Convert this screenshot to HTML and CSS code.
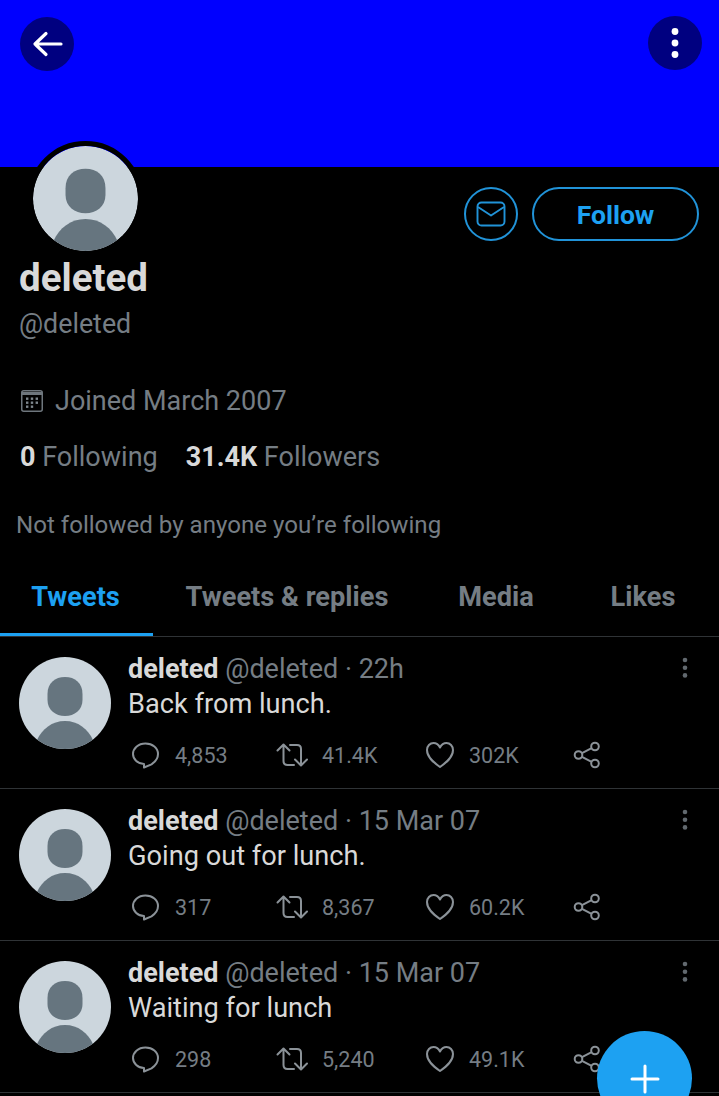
FILE: index.html
```html
<!DOCTYPE html>
<html lang="en">
  <head>
    <meta charset="UTF-8" />
    <meta name="viewport" content="width=device-width, initial-scale=1.0" />
    <title>deleted</title>
    <link rel="stylesheet" href="styles.css">
  </head>
  <body>
    <div class="page">
      <div class="banner">
        <button class="round-btn">
          <svg width="34" height="34" viewBox="0 0 34 34" fill="none" stroke="#fff" stroke-width="3.200" stroke-linecap="round" stroke-linejoin="round"><path d="M5 17h26M16 6.500L5 17l11 10.500"/></svg>
        </button>
        <button class="round-btn round-btn-more">
          <svg width="10" height="32" viewBox="0 0 10 32"><circle cx="5" cy="4.500" r="3.400" fill="#fff"/><circle cx="5" cy="16" r="3.400" fill="#fff"/><circle cx="5" cy="27.500" r="3.400" fill="#fff"/></svg>
        </button>
      </div>

      <div class="profile">
        <div class="actions">
          <button class="outline-btn mail-btn">
            <svg width="30" height="26" viewBox="0 0 30 26" fill="none" stroke="#2193d8" stroke-width="1.900" stroke-linejoin="round"><rect x="1.500" y="1.500" width="27" height="23" rx="4"/><path d="M2 6l13 8.500L28 6"/></svg>
          </button>
          <button class="outline-btn follow-btn">Follow</button>
        </div>
        <div class="big-avatar">
          <svg class="avatar-pic" viewBox="0 0 92 92"><use href="#person"/></svg>
        </div>
        <div class="name">deleted</div>
        <div class="handle">@deleted</div>
        <div class="joined">
          <svg width="22" height="22" viewBox="0 0 22 22" fill="none"><rect x="0.750" y="0.750" width="20.500" height="20.500" rx="2" stroke="#6e767d" stroke-width="1.500"/><path d="M1 3.500h20" stroke="#6e767d" stroke-width="3"/><g fill="#7d858c"><rect x="5" y="7.500" width="2.400" height="2.400"/><rect x="9.800" y="7.500" width="2.400" height="2.400"/><rect x="14.600" y="7.500" width="2.400" height="2.400"/><rect x="5" y="11.500" width="2.400" height="2.400"/><rect x="9.800" y="11.500" width="2.400" height="2.400"/><rect x="14.600" y="11.500" width="2.400" height="2.400"/><rect x="5" y="15.500" width="2.400" height="2.400"/><rect x="9.800" y="15.500" width="2.400" height="2.400"/></g></svg>
          <span>Joined March 2007</span>
        </div>
        <div class="counts">
          <span><b>0</b> Following</span>
          <span><b>31.4K</b> Followers</span>
        </div>
        <div class="not-followed">Not followed by anyone you’re following</div>
      </div>

      <div class="tabs">
        <div class="tab tab-active">Tweets</div>
        <div class="tab tab-replies">Tweets &amp; replies</div>
        <div class="tab tab-media">Media</div>
        <div class="tab tab-likes">Likes</div>
      </div>

      <div class="tweet">
        <svg class="avatar-pic small" viewBox="0 0 92 92"><use href="#person"/></svg>
        <div class="tweet-body">
          <div class="tweet-head"><b>deleted</b> @deleted · 22h</div>
          <div class="tweet-text">Back from lunch.</div>
          <div class="stats">
            <div class="stat stat-reply"><svg width="30" height="30"><use href="#i-reply"/></svg>4,853</div>
            <div class="stat stat-rt"><svg width="32" height="30"><use href="#i-rt"/></svg>41.4K</div>
            <div class="stat stat-like"><svg width="30" height="30"><use href="#i-like"/></svg>302K</div>
            <svg width="30" height="30"><use href="#i-share"/></svg>
          </div>
        </div>
        <svg class="more" width="6" height="22" viewBox="0 0 6 22"><use href="#i-more"/></svg>
      </div>

      <div class="tweet">
        <svg class="avatar-pic small" viewBox="0 0 92 92"><use href="#person"/></svg>
        <div class="tweet-body">
          <div class="tweet-head"><b>deleted</b> @deleted · 15 Mar 07</div>
          <div class="tweet-text">Going out for lunch.</div>
          <div class="stats">
            <div class="stat stat-reply"><svg width="30" height="30"><use href="#i-reply"/></svg>317</div>
            <div class="stat stat-rt"><svg width="32" height="30"><use href="#i-rt"/></svg>8,367</div>
            <div class="stat stat-like"><svg width="30" height="30"><use href="#i-like"/></svg>60.2K</div>
            <svg width="30" height="30"><use href="#i-share"/></svg>
          </div>
        </div>
        <svg class="more" width="6" height="22" viewBox="0 0 6 22"><use href="#i-more"/></svg>
      </div>

      <div class="tweet">
        <svg class="avatar-pic small" viewBox="0 0 92 92"><use href="#person"/></svg>
        <div class="tweet-body">
          <div class="tweet-head"><b>deleted</b> @deleted · 15 Mar 07</div>
          <div class="tweet-text">Waiting for lunch</div>
          <div class="stats">
            <div class="stat stat-reply"><svg width="30" height="30"><use href="#i-reply"/></svg>298</div>
            <div class="stat stat-rt"><svg width="32" height="30"><use href="#i-rt"/></svg>5,240</div>
            <div class="stat stat-like"><svg width="30" height="30"><use href="#i-like"/></svg>49.1K</div>
            <svg width="30" height="30"><use href="#i-share"/></svg>
          </div>
        </div>
        <svg class="more" width="6" height="22" viewBox="0 0 6 22"><use href="#i-more"/></svg>
      </div>

      <div class="fab">
        <svg width="30" height="30" viewBox="0 0 30 30" stroke="#fff" stroke-width="3" stroke-linecap="round"><path d="M15 2v26M2 15h26"/></svg>
      </div>
    </div>

    <!-- icons used more than once -->
    <svg class="defs" width="0" height="0">
      <defs>
        <g id="person">
          <rect width="92" height="92" fill="#ccd6dd"/>
          <path d="M46 20c-10 0-17.500 6-17.500 17v6c0 10 8 16 17.500 16s17.500-6 17.500-16v-6C63.500 26 56 20 46 20z" fill="#66757f"/>
          <path d="M46 64c-13 0-23 8-28 19v12h56V83c-5-11-15-19-28-19z" fill="#66757f"/>
        </g>
        <g id="i-reply" fill="none" stroke="#8b9298" stroke-width="2" stroke-linejoin="round">
          <path d="M14.500 3.500c7 0 12.500 4.500 12.500 10.500 0 5-3 8-6.500 10.300L13 27.500V24C7 24 2 19.500 2 14S7 3.500 14.500 3.500z"/>
        </g>
        <g id="i-rt" fill="none" stroke="#8b9298" stroke-width="2" stroke-linecap="round" stroke-linejoin="round">
          <path d="M1.500 10.500l6-6 6 6M7.500 5v16c0 2.500 1.500 4 4 4H18"/>
          <path d="M31 19.500l-6 6-6-6M25 25V9c0-2.500-1.500-4-4-4h-7"/>
        </g>
        <g id="i-like" fill="none" stroke="#8b9298" stroke-width="2" stroke-linejoin="round">
          <path d="M15 27C8 22 2 17 2 10 2 6 5 3 8.500 3c3 0 5 1.500 6.500 4.500C16.500 4.500 18.500 3 21.500 3 25 3 28 6 28 10c0 7-6 12-13 17z"/>
        </g>
        <g id="i-share" fill="none" stroke="#8b9298" stroke-width="2">
          <circle cx="6.500" cy="15" r="3.800"/><circle cx="23" cy="6.500" r="3.800"/><circle cx="23" cy="23.500" r="3.800"/>
          <path d="M10 13.200l9.600-5M10 16.800l9.600 5"/>
        </g>
        <g id="i-more" fill="#62696f">
          <circle cx="3" cy="3" r="2.300"/><circle cx="3" cy="10.700" r="2.300"/><circle cx="3" cy="18.400" r="2.300"/>
        </g>
      </defs>
    </svg>
  </body>
</html>
```

FILE: styles.css
```css
html, body {
  margin: 0;
  height: 1096px;
  overflow: hidden;
  background-color: #000;
}

.page {
  position: relative;
  width: 719px;
  height: 1096px;
  overflow: hidden;
  font-family: Roboto, "Liberation Sans", sans-serif;
  color: #757d84;
}

.defs {
  position: absolute;
}

.banner {
  height: 167px;
  background-color: #0000ff;
  display: flex;
  justify-content: space-between;
  align-items: flex-start;
  padding: 17px 17px 0 20px;
  box-sizing: border-box;
}

.round-btn {
  width: 54px;
  height: 54px;
  border: none;
  border-radius: 50%;
  padding: 0;
  background-color: #000080;
  display: flex;
  align-items: center;
  justify-content: center;
}

.round-btn-more {
  margin-top: -1px;
}

.profile {
  position: relative;
  height: 379px;
  padding-left: 19px;
  box-sizing: border-box;
}

.actions {
  display: flex;
  justify-content: flex-end;
  gap: 14px;
  padding: 20px 20px 0 0;
}

.outline-btn {
  height: 54px;
  border: 2px solid #2193d8;
  border-radius: 27px;
  background: none;
  color: #1da1f2;
  padding: 1px 0 0;
  display: flex;
  align-items: center;
  justify-content: center;
  font-family: inherit;
  font-weight: 700;
  font-size: 26.500px;
}

.mail-btn {
  width: 54px;
  padding: 0;
}

.follow-btn {
  width: 167px;
}

.big-avatar {
  position: absolute;
  left: 28px;
  top: -26px;
  width: 105px;
  height: 105px;
  border: 5px solid #000;
  border-radius: 50%;
  overflow: hidden;
}

.avatar-pic {
  display: block;
  width: 100%;
  height: 100%;
  border-radius: 50%;
  flex-shrink: 0;
}

.avatar-pic.small {
  width: 92px;
  height: 92px;
  margin-top: 20px;
}

.name {
  margin-top: 15px;
  font-size: 38.500px;
  line-height: 44px;
  font-weight: 700;
  color: #d9d9d9;
}

.handle {
  margin-top: 6px;
  font-size: 26.800px;
  line-height: 36px;
}

.joined {
  margin-top: 41px;
  padding-left: 2px;
  display: flex;
  align-items: center;
  gap: 12px;
  font-size: 27px;
  line-height: 36px;
}

.counts {
  margin-top: 20px;
  padding-left: 1px;
  display: flex;
  gap: 28px;
  font-size: 27px;
  line-height: 36px;
}

.counts b {
  color: #d9d9d9;
}

.not-followed {
  margin: 34px 0 0 -3px;
  font-size: 24.100px;
  line-height: 32px;
}

.tabs {
  height: 90px;
  display: flex;
  border-bottom: 1px solid #2f3336;
  box-sizing: content-box;
  font-size: 27.200px;
  font-weight: 700;
}

.tab {
  box-sizing: border-box;
  height: 90px;
  padding-top: 33px;
  line-height: 36px;
  text-align: center;
}

.tab-active {
  width: 153px;
  padding-right: 2px;
  color: #1da1f2;
  border-bottom: 3px solid #1da1f2;
}

.tab-replies {
  width: 268px;
}

.tab-media {
  width: 148px;
  padding-left: 2px;
}

.tab-likes {
  width: 146px;
  padding-left: 2px;
}

.tweet {
  height: 151px;
  box-sizing: content-box;
  display: flex;
  padding-left: 19px;
  border-bottom: 1px solid #2f3336;
  position: relative;
}

.tweet-body {
  margin-left: 17px;
  flex: 1;
}

.tweet-head {
  margin-top: 15px;
  font-size: 27px;
  line-height: 35px;
}

.tweet-head b {
  color: #d9d9d9;
}

.tweet-text {
  font-size: 27.200px;
  line-height: 34px;
  color: #d9d9d9;
}

.stats {
  margin-top: 19px;
  display: flex;
  align-items: center;
  font-size: 21.500px;
}

.stat {
  display: flex;
  align-items: center;
  gap: 14px;
}

.stat-reply {
  width: 145px;
  margin-left: 3px;
}

.stat-rt {
  width: 149px;
}

.stat-like {
  width: 147px;
}

.more {
  position: absolute;
  right: 31px;
  top: 20px;
}

.fab {
  position: absolute;
  left: 597px;
  top: 1031px;
  width: 95px;
  height: 95px;
  border-radius: 50%;
  background-color: #1da1f2;
  display: flex;
  align-items: center;
  justify-content: center;
}
```
